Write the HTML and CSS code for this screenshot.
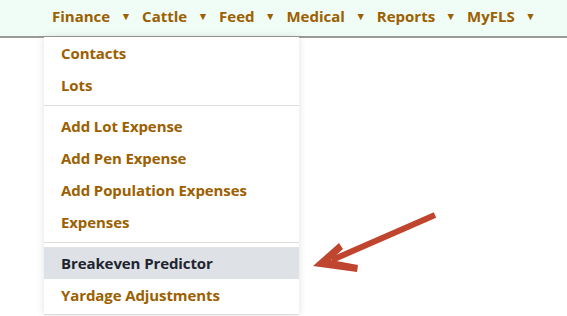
FILE: index.html
```html
<!DOCTYPE html>
<html>
<head>
<meta charset="utf-8">
<link rel="stylesheet" href="styles.css">
</head>
<body>
<nav class="navbar">
  <div class="nav-item has-menu">
    <span class="nav-link">Finance</span><span class="caret">▼</span>
    <ul class="dropdown">
      <li class="item">Contacts</li>
      <li class="item">Lots</li>
      <li class="divider"></li>
      <li class="item">Add Lot Expense</li>
      <li class="item">Add Pen Expense</li>
      <li class="item">Add Population Expenses</li>
      <li class="item">Expenses</li>
      <li class="divider"></li>
      <li class="item active">Breakeven Predictor</li>
      <li class="item">Yardage Adjustments</li>
    </ul>
  </div>
  <div class="nav-item"><span class="nav-link">Cattle</span><span class="caret">▼</span></div>
  <div class="nav-item"><span class="nav-link">Feed</span><span class="caret">▼</span></div>
  <div class="nav-item"><span class="nav-link">Medical</span><span class="caret">▼</span></div>
  <div class="nav-item"><span class="nav-link">Reports</span><span class="caret">▼</span></div>
  <div class="nav-item"><span class="nav-link">MyFLS</span><span class="caret">▼</span></div>
</nav>
<svg class="arrow" width="140" height="70" viewBox="0 0 140 70">
  <path d="M125 5 L22 50" stroke="#c0452f" stroke-width="6" fill="none"/>
  <path d="M3 56 L29 33 L33 39 L21 50 L48 55 L47 62 Z" fill="#c0452f"/>
</svg>
</body>
</html>
```
FILE: styles.css
```css
html, body {
  margin: 0;
  padding: 0;
  background: #fff;
  width: 567px;
  height: 316px;
  overflow: hidden;
  font-family: "Open Sans", "Noto Sans", sans-serif;
}
.navbar {
  display: flex;
  align-items: center;
  height: 36px;
  padding-left: 52px;
  background: #f0fcf6;
  border-bottom: 2px solid #9a9a9a;
}
.nav-item {
  position: relative;
  display: flex;
  align-items: center;
  height: 36px;
  padding-bottom: 5px;
  box-sizing: border-box;
  margin-right: 11px;
}
.nav-link {
  color: #9c6000;
  font-weight: 700;
  font-size: 15px;
  letter-spacing: 0;
}
.caret {
  color: #9c6000;
  font-size: 10.5px;
  margin-left: 10.5px;
}
.dropdown {
  position: absolute;
  top: 37px;
  left: -8px;
  width: 255px;
  margin: 0;
  padding: 0 0 3px;
  list-style: none;
  background: #fff;
  border-bottom: 1px solid #dcdcdc;
  box-shadow: 0 0 8px rgba(0,0,0,0.12);
  z-index: 2;
}
.item {
  height: 32px;
  line-height: 32px;
  padding-left: 17px;
  color: #9c6000;
  font-weight: 700;
  font-size: 15px;
  letter-spacing: -0.1px;
  white-space: nowrap;
}
.item.active {
  background: #dee1e5;
  color: #1e2530;
}
.divider {
  height: 1px;
  background: #dcdcdc;
  margin: 4px 0;
}
.arrow {
  position: absolute;
  left: 310px;
  top: 210px;
}
```
